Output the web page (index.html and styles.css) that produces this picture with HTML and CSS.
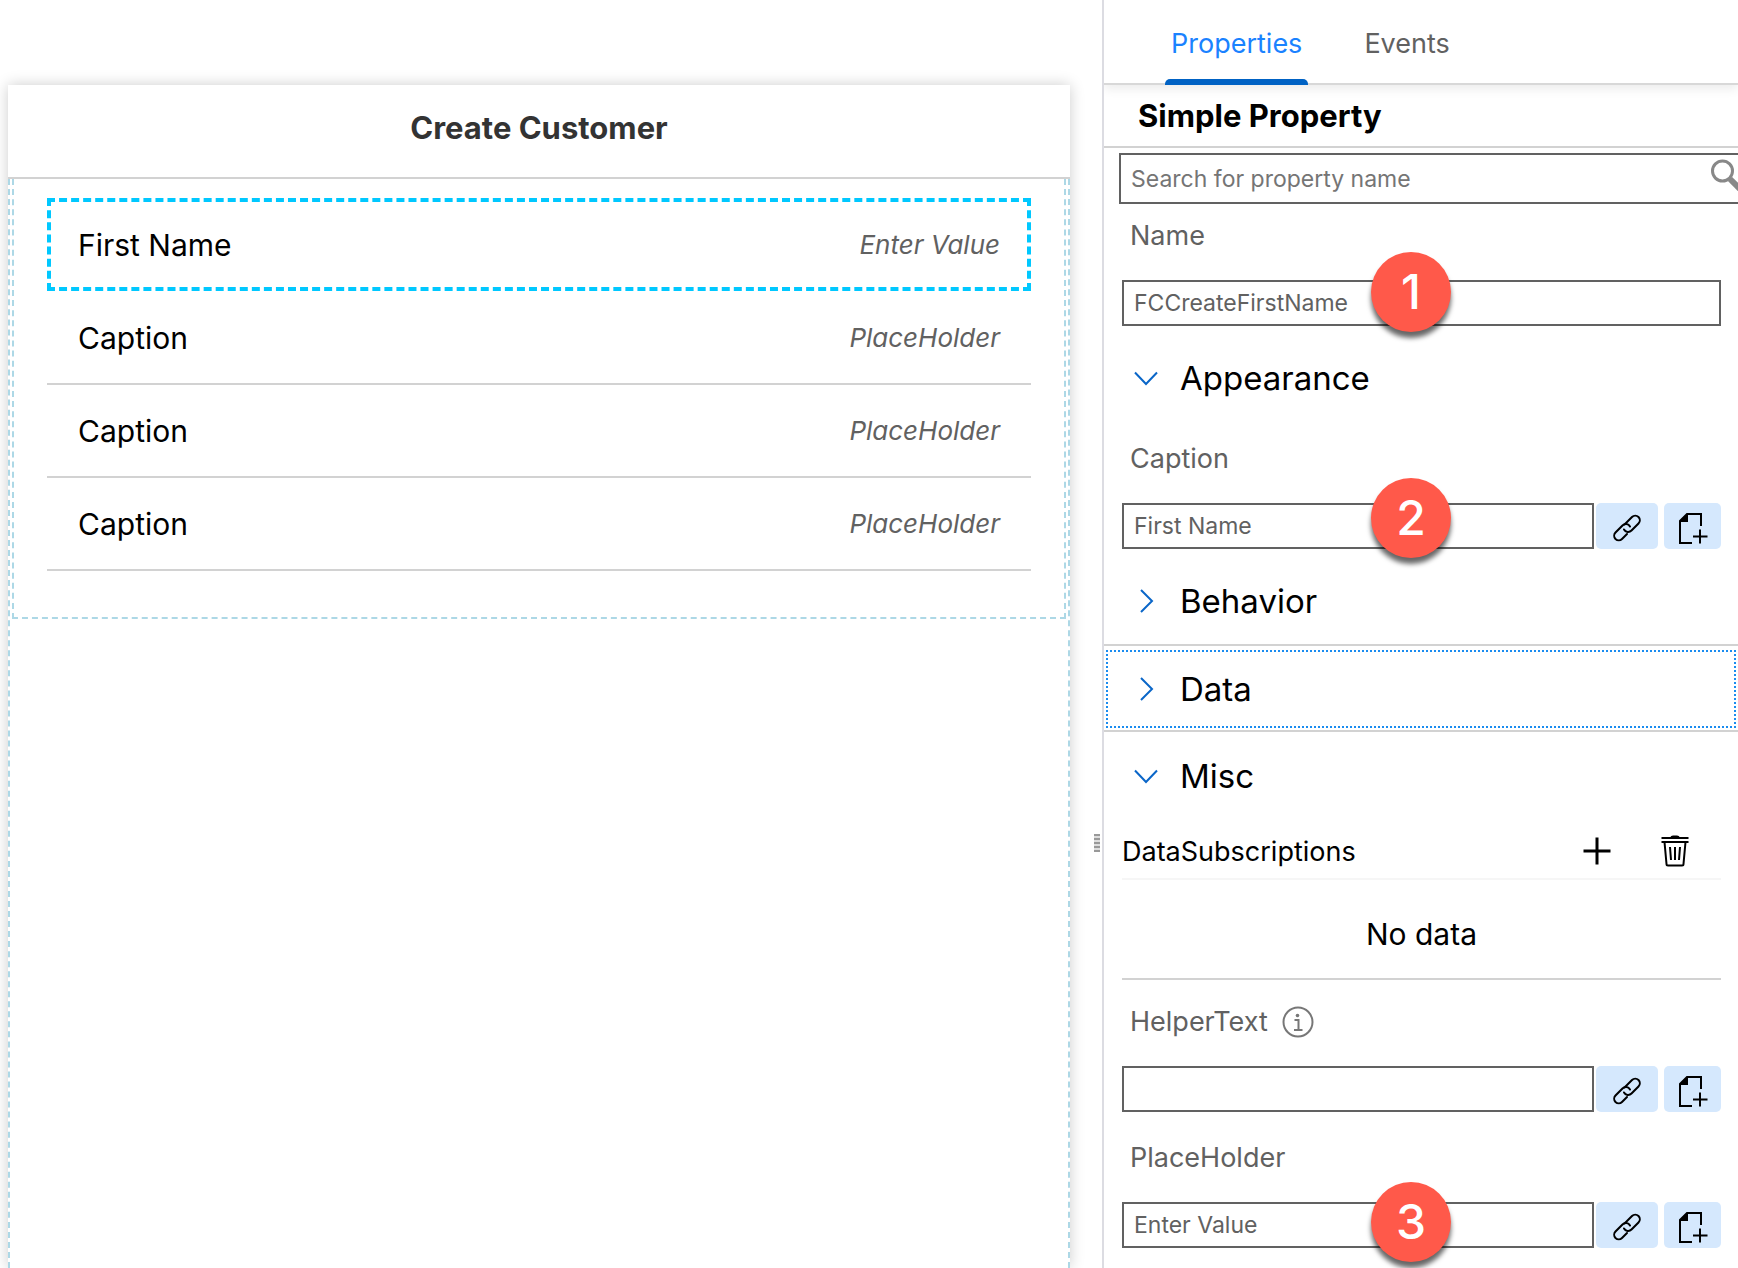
FILE: index.html
```html
<!DOCTYPE html>
<html lang="en">
<head>
<meta charset="utf-8">
<title>Create Customer</title>
<link rel="stylesheet" href="styles.css">
</head>
<body>
<svg class="sprite" aria-hidden="true">
  <symbol id="chevron-down" viewBox="0 0 24 24"><path d="M1 6.500 12 18 23 6.500" fill="none" stroke="currentColor" stroke-width="2"/></symbol>
  <symbol id="chevron-right" viewBox="0 0 24 24"><path d="M7 1 18 12 7 23" fill="none" stroke="currentColor" stroke-width="2"/></symbol>
  <symbol id="link" viewBox="0 0 28 28"><g fill="none" stroke="currentColor" stroke-width="2" stroke-linecap="round" stroke-linejoin="round"><path d="M11.500 10.500 19 3a4.700 4.700 0 0 1 6.500 0a4.700 4.700 0 0 1 0 6.500L18.500 16.500a4.700 4.700 0 0 1-7.500-1"/><path d="M17 12.500a4.700 4.700 0 0 0-7.500-1L2.500 18.500a4.700 4.700 0 0 0 0 6.500a4.700 4.700 0 0 0 6.500 0L14 20"/></g></symbol>
  <symbol id="page-add" viewBox="0 0 30 32"><path d="M1 10 10 1V10Z" fill="currentColor"/><path d="M14 31H2V9L9 2H23V14M22 17.500V31.500M15 24.500H29.500" fill="none" stroke="currentColor" stroke-width="2"/></symbol>
  <symbol id="plus" viewBox="0 0 28 28"><path d="M14 0.500V27.500M0.500 14H27.500" fill="none" stroke="currentColor" stroke-width="3"/></symbol>
  <symbol id="trash" viewBox="0 0 28 32"><path d="M9 2.500Q10 0.500 12 0.500H16Q18 0.500 19 2.500Z" fill="currentColor"/><path d="M0.500 3H27.500M0.500 7H27.500M3.500 7 5.500 29Q5.500 30.500 7 30.500H21Q22.500 30.500 22.500 29L24.500 7M9 12 10 25M14 12V25M19 12 18 25" fill="none" stroke="currentColor" stroke-width="2"/></symbol>
  <symbol id="info" viewBox="0 0 32 32"><circle cx="16" cy="16" r="14.500" fill="none" stroke="currentColor" stroke-width="2"/><circle cx="15.500" cy="9.500" r="1.800" fill="currentColor"/><path d="M12.500 14H16.500V24M12 24H20.500" fill="none" stroke="currentColor" stroke-width="2"/></symbol>
  <symbol id="search" viewBox="0 0 32 32"><circle cx="12.500" cy="12" r="10" fill="none" stroke="currentColor" stroke-width="3"/><path d="M20 20 31 31" fill="none" stroke="currentColor" stroke-width="6"/></symbol>
</svg>

<div class="editor">
  <main class="canvas">
    <section class="form-card">
      <h1 class="form-title">Create Customer</h1>
      <div class="drop-area">
        <div class="drop-section">
          <div class="form-row selected"><span>First Name</span><em>Enter Value</em></div>
          <div class="form-row"><span>Caption</span><em>PlaceHolder</em></div>
          <div class="form-row"><span>Caption</span><em>PlaceHolder</em></div>
          <div class="form-row"><span>Caption</span><em>PlaceHolder</em></div>
        </div>
      </div>
    </section>
    <div class="splitter"><div class="grip"></div></div>
  </main>

  <aside class="panel">
    <nav class="tabs">
      <button class="tab active" type="button">Properties</button>
      <button class="tab" type="button">Events</button>
    </nav>
    <h2 class="panel-title">Simple Property</h2>
    <div class="search">
      <input class="box search-input" type="search" placeholder="Search for property name" aria-label="Search for property name">
      <svg class="search-icon"><use href="#search"/></svg>
    </div>

    <div class="field first">
      <label for="name">Name</label>
      <div class="control">
        <input class="box" id="name" type="text" value="FCCreateFirstName">
        <span class="badge step-1">1</span>
      </div>
    </div>

    <h3 class="group"><button type="button" aria-expanded="true"><svg><use href="#chevron-down"/></svg>Appearance</button></h3>
    <div class="field">
      <label for="caption">Caption</label>
      <div class="control">
        <input class="box" id="caption" type="text" value="First Name">
        <button class="action link" type="button" aria-label="Bind caption"><svg><use href="#link"/></svg></button>
        <button class="action page" type="button" aria-label="Add caption text"><svg><use href="#page-add"/></svg></button>
        <span class="badge step-2">2</span>
      </div>
    </div>

    <h3 class="group"><button type="button" aria-expanded="false"><svg><use href="#chevron-right"/></svg>Behavior</button></h3>
    <h3 class="group focused"><button type="button" aria-expanded="false"><svg><use href="#chevron-right"/></svg>Data</button></h3>
    <h3 class="group"><button type="button" aria-expanded="true"><svg><use href="#chevron-down"/></svg>Misc</button></h3>

    <div class="list">
      <div class="list-head">
        <span>DataSubscriptions</span>
        <button class="tool" type="button" aria-label="Add"><svg class="plus-icon"><use href="#plus"/></svg></button>
        <button class="tool" type="button" aria-label="Delete"><svg class="trash-icon"><use href="#trash"/></svg></button>
      </div>
      <p class="empty">No data</p>
    </div>

    <div class="field">
      <label for="helper">HelperText <svg class="info-icon"><use href="#info"/></svg></label>
      <div class="control">
        <input class="box" id="helper" type="text">
        <button class="action link" type="button" aria-label="Bind helper text"><svg><use href="#link"/></svg></button>
        <button class="action page" type="button" aria-label="Add helper text"><svg><use href="#page-add"/></svg></button>
      </div>
    </div>
    <div class="field">
      <label for="placeholder">PlaceHolder</label>
      <div class="control">
        <input class="box" id="placeholder" type="text" value="Enter Value">
        <button class="action link" type="button" aria-label="Bind placeholder"><svg><use href="#link"/></svg></button>
        <button class="action page" type="button" aria-label="Add placeholder text"><svg><use href="#page-add"/></svg></button>
        <span class="badge step-3">3</span>
      </div>
    </div>
  </aside>
</div>
</body>
</html>
```

FILE: styles.css
```css
* { box-sizing: border-box; }

body {
  margin: 0;
  background: #fff;
  color: #000;
  font-family: Inter, "Liberation Sans", sans-serif;
  font-size: 27px;
  line-height: 32px;
}

h1, h2, h3, p { margin: 0; font-weight: 400; }

button {
  padding: 0;
  border: 0;
  background: none;
  color: inherit;
  font: inherit;
}

.sprite { position: absolute; width: 0; height: 0; }

.editor {
  display: grid;
  grid-template-columns: minmax(0, 1fr) 636px;
  min-height: 100vh;
}

/* Canvas */
.canvas {
  display: flex;
  padding: 85px 0 0 8px;
}

.form-card {
  flex: 1;
  display: flex;
  flex-direction: column;
  box-shadow: 0 0 14px rgba(0, 0, 0, 0.2);
}

.form-title {
  padding: 27px 0 33px;
  border-bottom: 2px solid #d2d2d2;
  color: #333;
  font-size: 31px;
  font-weight: 700;
  text-align: center;
}

.drop-area {
  flex: 1;
  padding: 0 2px;
  border: dashed #add8e6;
  border-width: 0 2px;
}

.drop-section {
  padding: 19px 33px 46px;
  border: 2px dashed #add8e6;
  border-top: 0;
}

.form-row {
  display: flex;
  align-items: center;
  justify-content: space-between;
  height: 93px;
  padding: 0 31px;
  border-bottom: 2px solid #d2d2d2;
  font-size: 30px;
}

.form-row em { color: #616161; font-size: 26px; }

.form-row.selected {
  margin-bottom: 1px;
  padding: 0 27px;
  border: 4px dashed #00c8ff;
}

.splitter {
  display: flex;
  flex: 0 0 32px;
  flex-direction: column;
  align-items: flex-end;
  padding-right: 2px;
}

.splitter::before { content: ""; flex: 9; }
.splitter::after { content: ""; flex: 5; }

.grip {
  width: 6px;
  height: 18px;
  background: repeating-linear-gradient(#999 0 2px, #ddd 2px 4px);
}

/* Property panel */
.panel {
  overflow: hidden;
  border-left: 2px solid #dcdce2;
}

.tabs {
  display: flex;
  gap: 50px;
  height: 85px;
  padding-left: 61px;
  border-bottom: 2px solid #d8d8d8;
  box-shadow: 0 4px 10px rgba(0, 0, 0, 0.08);
  color: #616161;
}

.tab { height: 85px; padding: 2px 6px 0; }

.tab.active {
  position: relative;
  color: #1a82ff;
}

.tab.active::after {
  content: "";
  position: absolute;
  right: 0;
  bottom: 0;
  left: 0;
  height: 6px;
  border-radius: 5px 5px 0 0;
  background: #0062c4;
}

.panel-title {
  padding: 15px 34px 14px;
  border-bottom: 2px solid #d2d2d2;
  font-size: 31px;
  font-weight: 700;
}

.search {
  display: flex;
  align-items: center;
  margin: 5px -32px 0 15px;
}

.box {
  flex: 1;
  min-width: 0;
  height: 46px;
  padding: 0 10px;
  border: 2px solid #616161;
  border-radius: 0;
  outline: 0;
  background: #fff;
  color: #616161;
  font: 23px/32px Inter, "Liberation Sans", sans-serif;
}

.search-input { height: 51px; appearance: none; }
.search-input::placeholder { color: #757575; opacity: 1; }

.search-icon {
  flex: none;
  width: 32px;
  height: 32px;
  margin: 0 28px 8px -60px;
  color: #888;
}

.field {
  display: flex;
  flex-direction: column;
  gap: 28px;
  padding: 22px 17px 8px 18px;
}

.field.first { padding-top: 16px; }

.field label {
  display: flex;
  align-items: center;
  gap: 14px;
  padding-left: 8px;
  color: #616161;
}

.info-icon { width: 32px; height: 32px; color: #777; }

.control { position: relative; display: flex; }

.action {
  display: flex;
  align-items: center;
  justify-content: center;
  height: 46px;
  padding-top: 3px;
  border-radius: 5px;
  background: #d5e8fd;
}

.action.link { width: 62px; margin: 0 6px 0 2px; }
.action.link svg { width: 28px; height: 28px; }
.action.page { width: 57px; }
.action.page svg { width: 30px; height: 32px; }

/* Step markers laid over the fields */
.badge {
  position: absolute;
  left: 249px;
  width: 80px;
  height: 80px;
  border-radius: 50%;
  background: #ff594a;
  box-shadow: 0 6px 5px rgba(0, 0, 0, 0.6);
  color: #fff;
  font-size: 48px;
  font-weight: 500;
  line-height: 80px;
  text-align: center;
}

.step-1 { top: -28px; }
.step-2 { top: -25px; }
.step-3 { top: -20px; }

.group { font-size: 33px; }

.group button {
  display: flex;
  align-items: center;
  gap: 22px;
  width: 100%;
  height: 87px;
  padding-left: 30px;
}

.group svg { width: 24px; height: 24px; color: #0a66c8; }

.group.focused {
  padding: 4px 2px 2px;
  border: solid #d2d2d2;
  border-width: 2px 0;
}

.group.focused button {
  height: 78px;
  padding-left: 26px;
  border: 2px dotted #1a8cf0;
}

.list { margin: 0 17px 4px 18px; border-bottom: 2px solid #d2d2d2; }

.list-head {
  display: flex;
  align-items: center;
  gap: 50px;
  height: 61px;
  padding: 4px 32px 0 0;
  border-bottom: 2px solid #f6f6f6;
}

.list-head span { flex: 1; padding-top: 3px; }
.tool { display: flex; }
.plus-icon { width: 28px; height: 28px; }
.trash-icon { width: 28px; height: 32px; }

.empty { padding: 38px 0 28px; font-size: 30px; text-align: center; }
```
